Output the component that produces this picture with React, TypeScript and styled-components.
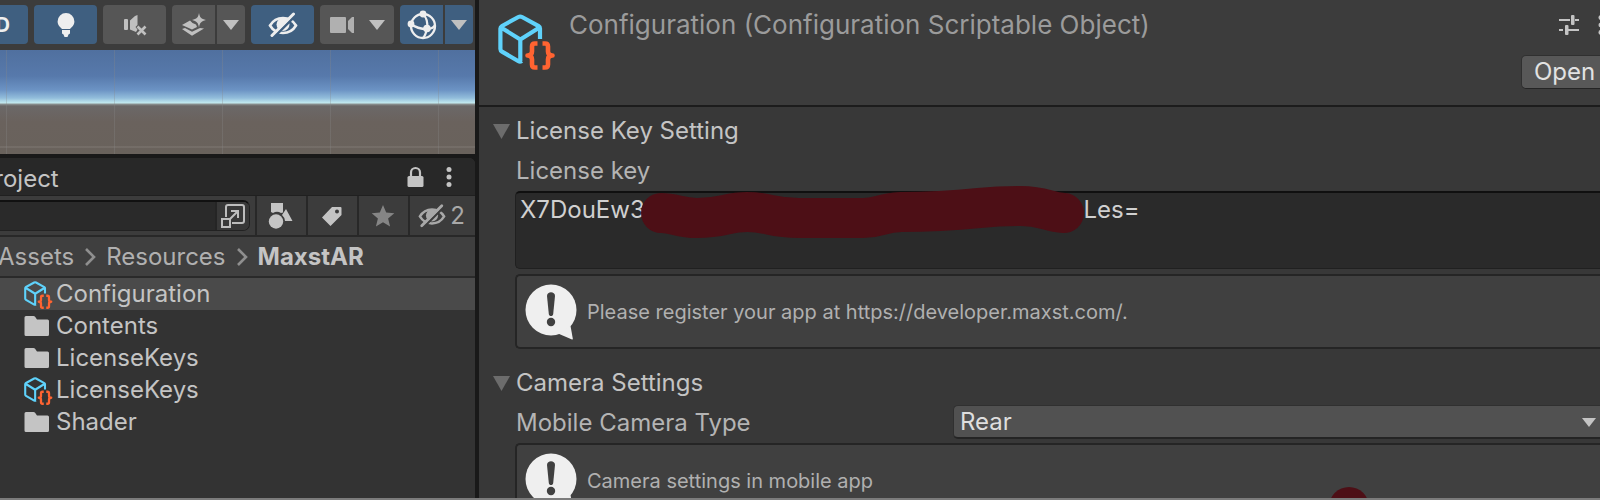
import React, { useState } from 'react';
import styled, { createGlobalStyle } from 'styled-components';

const GlobalStyle = createGlobalStyle`
  *, *::before, *::after { box-sizing: border-box; }
  body {
    margin: 0;
    background: #191919;
    color: #c4c4c4;
    font-family: Inter, "Liberation Sans", sans-serif;
    font-size: 24px;
    line-height: 32px;
  }
  button, input, select, textarea { font: inherit; color: inherit; }
  button { border: 0; padding: 0; background: none; }
  svg { display: block; flex: none; }
`;

const Editor = styled.div`
  display: flex;
  flex-direction: column;
  height: 100vh;
  overflow: hidden;
  border-bottom: 2px solid #7c7c7c;
`;

const Panes = styled.div`
  flex: 1;
  min-height: 0;
  display: grid;
  grid-template-columns: minmax(0, 475fr) minmax(0, 1121fr);
  column-gap: 4px;
`;

/* Left column: scene view over project browser */

const LeftPane = styled.div`
  display: flex;
  flex-direction: column;
  overflow: hidden;
`;

const SceneToolbar = styled.div`
  display: flex;
  justify-content: flex-end;
  gap: 6px;
  padding: 5px 2px 6px;
  background: #3c3c3c;
`;

const ToolGroup = styled.div`
  display: flex;
  gap: 2px;
`;

const ToolButton = styled.button<{ $width: number; $on?: boolean; $join?: 'left' | 'right' }>`
  display: flex;
  flex: none;
  align-items: center;
  justify-content: center;
  gap: 14px;
  width: ${(p) => p.$width}px;
  height: 39px;
  background: ${(p) => (p.$on ? '#3f5f80' : '#565656')};
  border-radius: ${(p) =>
    p.$join === 'left' ? '4px 0 0 4px' : p.$join === 'right' ? '0 4px 4px 0' : '4px'};
  color: ${(p) => (p.$on && p.$join !== 'right' ? '#eeeeee' : '#c0c0c0')};
  font-size: 20px;
  font-weight: 700;
`;

const SceneView = styled.div`
  height: 104px;
  background:
    repeating-linear-gradient(90deg, transparent 0 6px, #8888884d 6px 7px, transparent 7px 108px),
    linear-gradient(transparent 96px, #ffffff12 96px 98px, transparent 98px),
    linear-gradient(
      #50709f 0,
      #5779ab 26px,
      #6c93c4 40px,
      #92bddb 48px,
      #c3eaf0 53px,
      #8d9494 54px,
      #6b6868 56px,
      #6a625d 72px,
      #69625c 104px
    );
`;

const ProjectPanel = styled.section`
  flex: 1;
  display: flex;
  flex-direction: column;
  margin: 4px 0 0 -24px;
  background: #333333;
  border-top-right-radius: 6px;
  overflow: hidden;
`;

const TabBar = styled.div`
  display: flex;
  align-items: center;
  justify-content: space-between;
  height: 38px;
  padding: 0 23px 0 3px;
  background: #282828;
  border-bottom: 1px solid #202020;
`;

const TabTitle = styled.h2`
  margin: 4px 0 0;
  font-size: 24px;
  font-weight: 400;
`;

const TabActions = styled.div`
  display: flex;
  align-items: center;
  gap: 22px;
`;

const IconButton = styled.button`
  display: flex;
  align-items: center;
  justify-content: center;
`;

const BrowserToolbar = styled.div`
  display: flex;
  height: 41px;
  background: #3c3c3c;
  border-bottom: 2px solid #282828;
`;

const SearchBox = styled.div`
  flex: 1;
  min-width: 0;
  display: flex;
  margin: 4px 5px 4px 8px;
  border: 1px solid #222222;
  border-top: 2px solid #111111;
  border-radius: 7px;
  overflow: hidden;
`;

const SearchInput = styled.input`
  flex: 1;
  min-width: 0;
  border: 0;
  padding: 0 8px;
  background: #2a2a2a;
`;

const SearchJump = styled(IconButton)`
  width: 34px;
  background: #383838;
  border-left: 2px solid #252525;
`;

const FilterButton = styled.button<{ $wide?: boolean; $tone?: string }>`
  display: flex;
  align-items: center;
  justify-content: center;
  gap: 4px;
  width: ${(p) => (p.$wide ? 67 : 51)}px;
  padding-right: 2px;
  border-left: 2px solid #282828;
  color: ${(p) => p.$tone ?? '#c4c4c4'};
`;

const Breadcrumbs = styled.nav`
  display: flex;
  align-items: center;
  gap: 10px;
  height: 41px;
  padding-left: 22px;
  background: #3f3f3f;
  border-bottom: 2px solid #2a2a2a;
`;

const Crumb = styled.a<{ $current?: boolean }>`
  color: ${(p) => (p.$current ? '#c4c4c4' : '#b0b0b0')};
  font-weight: ${(p) => (p.$current ? 700 : 400)};
  text-decoration: none;
`;

const FileList = styled.ul`
  margin: 0;
  padding: 0;
  list-style: none;
`;

const FileRow = styled.li<{ $selected?: boolean }>`
  display: flex;
  align-items: center;
  gap: 3px;
  height: 32px;
  padding-left: 48px;
  background: ${(p) => (p.$selected ? '#4a4a4a' : 'transparent')};
`;

/* Right column: inspector */

const Inspector = styled.main`
  overflow: hidden;
  background: #383838;
`;

const InspectorHeader = styled.header`
  display: flex;
  gap: 13px;
  height: 107px;
  padding: 12px 0 0 19px;
  background: #3c3c3c;
  border-bottom: 2px solid #1c1c1c;
`;

const ObjectTitle = styled.h1`
  flex: 1;
  margin: -3px 0 0;
  color: #9b9b9b;
  font-size: 26px;
  font-weight: 400;
  white-space: nowrap;
`;

const HeaderActions = styled.div`
  display: flex;
  flex-direction: column;
  align-items: flex-end;
  gap: 17px;
  margin-right: -8px;
`;

const HeaderIcons = styled.div`
  display: flex;
  align-items: center;
  gap: 19px;
  height: 26px;
  padding-right: 4px;
`;

const OpenButton = styled.button`
  width: 87px;
  height: 34px;
  background: #585858;
  border: 1px solid #303030;
  border-bottom-color: #242424;
  border-radius: 5px;
  color: #e2e2e2;
  line-height: 30px;
`;

const Group = styled.section`
  padding: 4px 0 10px 36px;
`;

const Foldout = styled.h2`
  display: flex;
  align-items: center;
  gap: 6px;
  height: 40px;
  margin: 0 0 0 -22px;
  color: #c4c4c4;
  font-size: 24px;
  font-weight: 400;
`;

const FieldLabel = styled.label`
  display: block;
  height: 40px;
  padding-left: 1px;
  color: #b4b4b4;
  line-height: 40px;
`;

const KeyField = styled.div`
  position: relative;
  height: 78px;
  margin-bottom: 5px;
`;

const KeyArea = styled.textarea`
  display: block;
  width: 100%;
  height: 100%;
  padding: 1px 4px;
  background: #2a2a2a;
  border: 1px solid #202020;
  border-top: 2px solid #101010;
  border-right: 0;
  border-radius: 5px 0 0 5px;
  color: #d0d0d0;
  resize: none;
  overflow: hidden;
  outline: 0;
`;

const Stroke = styled.svg`
  position: absolute;
  top: -8px;
  left: 124px;
  pointer-events: none;
`;

const SelectRow = styled.div`
  display: grid;
  grid-template-columns: minmax(0, 438fr) minmax(0, 647fr);
  align-items: center;
  height: 40px;
`;

const SelectBox = styled.div`
  position: relative;
  display: flex;
  align-items: center;
  margin-bottom: 2px;
`;

const Select = styled.select`
  appearance: none;
  width: 100%;
  height: 34px;
  padding: 0 6px;
  background: #515151;
  border: 1px solid #303030;
  border-bottom: 2px solid #242424;
  border-right: 0;
  border-radius: 5px 0 0 5px;
  color: #dedede;
  line-height: 30px;
`;

const SelectArrow = styled.span`
  position: absolute;
  right: 4px;
  color: #c4c4c4;
  pointer-events: none;
`;

const HelpBox = styled.div`
  position: relative;
  display: flex;
  align-items: center;
  gap: 10px;
  height: 75px;
  padding-left: 8px;
  background: #404040;
  border: 2px solid #252525;
  border-right: 0;
  border-radius: 5px 0 0 5px;
  color: #b0b0b0;
  font-size: 20px;
  line-height: 28px;
`;

const Dot = styled.span`
  position: absolute;
  top: 42px;
  left: 75%;
  width: 40px;
  height: 40px;
  border-radius: 50%;
  background: #4d0f16;
`;

/* Icons */

const Triangle = ({ width = 16, height = 10 }: { width?: number; height?: number }) => (
  <svg width={width} height={height} viewBox="0 0 16 10" preserveAspectRatio="none">
    <path d="M0 0h16L8 10z" fill="currentColor" />
  </svg>
);

const FoldoutArrow = () => (
  <svg width="17" height="15" viewBox="0 0 17 15">
    <path d="M0 0h17L8.500 15z" fill="#6c6c6c" />
  </svg>
);

const BulbIcon = () => (
  <svg width="20" height="26" viewBox="0 0 20 26" fill="currentColor">
    <path d="M10 1a8.400 8.400 0 0 0-8.400 8.400c0 3.800 2.600 5.600 4.400 7.600h8c1.800-2 4.400-3.800 4.400-7.600A8.400 8.400 0 0 0 10 1z" />
    <path d="M6 18h8v3.500l-1.500 1L11.500 25h-3l-1-2.500-1.500-1z" />
  </svg>
);

const MuteIcon = () => (
  <svg width="24" height="22" viewBox="0 0 24 22" fill="currentColor">
    <rect x="1" y="5" width="4" height="11" rx="1" />
    <path d="M7 6.500 12 2l2.500-1v10l-2 2 2 2.500-1.500 2.500-6-2.500z" />
    <path d="m14.500 12.500 8 8M22.500 12.500l-8 8" stroke="currentColor" strokeWidth="2.600" />
  </svg>
);

const EffectsIcon = () => (
  <svg width="26" height="24" viewBox="0 0 26 24" fill="currentColor">
    <path d="M18 0c.8 4.500 2.200 6 7 7-4.800 1.200-6.200 2.700-7 7.500-.8-4.800-2.200-6.300-7-7.500 4.800-1 6.200-2.500 7-7z" />
    <path d="m1 12 8-4.500 2.500 2.500 3.500 1.500 1 2.500-5 2.500z" />
    <path d="m1 16 3-1 7 3.800 8-3.800 4 .5-12 7.200z" />
  </svg>
);

const EyeOffIcon = ({ width = 30, cut }: { width?: number; cut: string }) => (
  <svg width={width} height="26" viewBox="0 0 30 26" fill="none" stroke="currentColor">
    <path
      d="M2 13.500C5 8.500 9.500 6 15 6s10 2.500 13 7.500c-3 5-7.500 7.500-13 7.500S5 18.500 2 13.500z"
      strokeWidth="2.600"
    />
    <circle cx="15" cy="12.500" r="6.500" fill="currentColor" stroke="none" />
    <path d="M6.500 24.500 27.500 3.500" stroke={cut} strokeWidth="2.500" />
    <path d="M4 23.500 25.500 2" strokeWidth="3" strokeLinecap="round" />
  </svg>
);

const CameraIcon = () => (
  <svg width="25" height="18" viewBox="0 0 25 18" fill="currentColor" opacity=".85">
    <rect y="1" width="16" height="16" rx="1" />
    <path d="M18 5 22 1h2v16h-2l-4-4z" />
  </svg>
);

const GizmoIcon = () => (
  <svg width="30" height="30" viewBox="0 0 30 30" fill="none" stroke="currentColor" strokeWidth="2.300">
    <circle cx="16" cy="16" r="12" />
    <path d="M16 4c4 4 5 9 4 15-1 4-2 7-4 9M4 14c5 4 11 5 16 5 4 0 7-2 8-4" />
    <g fill="currentColor" stroke="none">
      <circle cx="16" cy="4" r="3.400" />
      <circle cx="4" cy="14" r="3.400" />
      <circle cx="20" cy="18.500" r="3.800" />
    </g>
  </svg>
);

const LockIcon = () => (
  <svg width="17" height="22" viewBox="0 0 17 22">
    <path d="M4 11V6.500a4.500 4.500 0 0 1 9 0V11" fill="none" stroke="currentColor" strokeWidth="2.200" />
    <rect x=".5" y="10" width="16" height="11" rx="1.500" fill="currentColor" />
  </svg>
);

const DotsIcon = () => (
  <svg width="6" height="20" viewBox="0 0 6 20" fill="currentColor">
    <circle cx="3" cy="2.600" r="2.500" />
    <circle cx="3" cy="10" r="2.500" />
    <circle cx="3" cy="17.400" r="2.500" />
  </svg>
);

const PopOutIcon = () => (
  <svg width="24" height="24" viewBox="0 0 24 24" fill="none" stroke="#bdbdbd" strokeWidth="2">
    <path d="M5 13V3a2 2 0 0 1 2-2h14a2 2 0 0 1 2 2v14a2 2 0 0 1-2 2H11" />
    <rect x="1" y="15" width="8" height="8" />
    <path d="m9 15 8-8M10 7h7v7" />
  </svg>
);

const ShapesIcon = () => (
  <svg width="26" height="28" viewBox="0 0 26 28" fill="currentColor">
    <path d="M3 1h12v9.500l-2 .5a8 8 0 0 0-8 0l-2-1z" />
    <circle cx="8" cy="19.500" r="7.200" />
    <path d="m18 7 6.500 12H17a9 9 0 0 0-3-6z" />
  </svg>
);

const TagIcon = () => (
  <svg width="22" height="22" viewBox="0 0 22 22">
    <path
      fillRule="evenodd"
      d="M11 2h8.500a1 1 0 0 1 1 1v7L9.500 21 1 12.500zM16 4.500a2 2 0 1 0 0 4 2 2 0 0 0 0-4z"
      fill="currentColor"
    />
  </svg>
);

const StarIcon = () => (
  <svg width="24" height="24" viewBox="0 0 24 24">
    <path d="m12 1 3.200 7.500 8.100.7-6.200 5.300 2 8L12 18.200 4.900 22.500l2-8L.7 9.200l8.100-.7z" fill="currentColor" />
  </svg>
);

const Chevron = () => (
  <svg width="12" height="18" viewBox="0 0 12 18">
    <path d="m2 1 8 8-8 8" fill="none" stroke="#8f8f8f" strokeWidth="2.600" />
  </svg>
);

const AssetIcon = ({ size }: { size: number }) => (
  <svg width={size} height={size} viewBox="0 0 58 58" fill="none" strokeLinejoin="round">
    <path
      d="M42 27V16.500c0-1-.4-1.800-1.300-2.300L24 5c-1.300-.7-2.300-.7-3.600 0L4 14c-1 .6-1.600 1.300-1.600 2.600V37c0 1.300.6 2 1.600 2.600l16.500 9.600c1 .6 2 .6 3.500-.2M3 15.500l19.300 12L41.500 15.500M22.300 28v21"
      stroke="#5fd2fb"
      strokeWidth="4.200"
    />
    <path
      d="M39.500 31.500H37c-2 0-3 1-3 3v5c0 2.500-1.500 4-4.500 4 3 0 4.500 1.500 4.500 4v5c0 2 1 3 3 3h2.500M44.500 31.500H47c2 0 3 1 3 3v5c0 2.500 1.500 4 4.500 4-3 0-4.500 1.500-4.500 4v5c0 2-1 3-3 3h-2.500"
      stroke="#ff6331"
      strokeWidth="4.600"
    />
  </svg>
);

const FolderIcon = () => (
  <svg width="29" height="22" viewBox="0 0 29 22">
    <path d="M2 1h7.500a2 2 0 0 1 1.600.8L13 4.500h10.500a1.500 1.500 0 0 1 1.500 1.500v13.500a1.500 1.500 0 0 1-1.500 1.500H2A1.500 1.500 0 0 1 .5 19.500v-17A1.500 1.500 0 0 1 2 1z" fill="#c4c4c4" />
  </svg>
);

const SlidersIcon = () => (
  <svg width="20" height="20" viewBox="0 0 20 20" fill="#c4c4c4">
    <path d="M0 4h11v2H0zM16 4h4v2h-4zM0 14h4v2H0zM9 14h11v2H9z" />
    <rect x="12" width="3.500" height="10" rx="1" />
    <rect x="6" y="10" width="3.500" height="10" rx="1" />
  </svg>
);

const NoticeIcon = () => (
  <svg width="52" height="56" viewBox="0 0 52 56">
    <circle cx="26" cy="26" r="25.500" fill="#efefef" />
    <path d="M33 49.500 47 55.500q1 .3.800-1L45.500 42z" fill="#efefef" />
    <path d="M22 12c0-5 8-5 8 0l-1.800 18c-.3 2.700-4.100 2.700-4.400 0z" fill="#404040" />
    <circle cx="26" cy="38" r="4.200" fill="#404040" />
  </svg>
);

const files = [
  { name: 'Configuration', kind: 'asset', selected: true },
  { name: 'Contents', kind: 'folder' },
  { name: 'LicenseKeys', kind: 'folder' },
  { name: 'LicenseKeys', kind: 'asset' },
  { name: 'Shader', kind: 'folder' },
];

const MASK = '\u00a0'.repeat(65);

export default function App() {
  const [licenseKey, setLicenseKey] = useState(`X7DouEw3${MASK}Les=`);

  return (
    <>
      <GlobalStyle />
      <Editor>
        <Panes>
          <LeftPane>
            <SceneToolbar>
              <ToolButton $width={63} $on>2D</ToolButton>
              <ToolButton $width={63} $on aria-label="Lighting"><BulbIcon /></ToolButton>
              <ToolButton $width={63} aria-label="Audio"><MuteIcon /></ToolButton>
              <ToolGroup>
                <ToolButton $width={43} $join="left" aria-label="Effects"><EffectsIcon /></ToolButton>
                <ToolButton $width={28} $join="right" aria-label="Effects menu"><Triangle /></ToolButton>
              </ToolGroup>
              <ToolButton $width={63} $on aria-label="Hidden objects"><EyeOffIcon cut="#3f5f80" /></ToolButton>
              <ToolButton $width={74} aria-label="Camera"><CameraIcon /><Triangle /></ToolButton>
              <ToolGroup>
                <ToolButton $width={43} $on $join="left" aria-label="Gizmos"><GizmoIcon /></ToolButton>
                <ToolButton $width={28} $on $join="right" aria-label="Gizmos menu"><Triangle /></ToolButton>
              </ToolGroup>
            </SceneToolbar>
            <SceneView />
            <ProjectPanel>
              <TabBar>
                <TabTitle>Project</TabTitle>
                <TabActions>
                  <IconButton aria-label="Lock"><LockIcon /></IconButton>
                  <IconButton aria-label="Menu"><DotsIcon /></IconButton>
                </TabActions>
              </TabBar>
              <BrowserToolbar>
                <SearchBox>
                  <SearchInput type="text" aria-label="Search assets" />
                  <SearchJump aria-label="Open search"><PopOutIcon /></SearchJump>
                </SearchBox>
                <FilterButton aria-label="Filter by type"><ShapesIcon /></FilterButton>
                <FilterButton aria-label="Filter by label"><TagIcon /></FilterButton>
                <FilterButton $tone="#858585" aria-label="Favorites"><StarIcon /></FilterButton>
                <FilterButton $wide $tone="#a8a8a8" aria-label="Hidden packages">
                  <EyeOffIcon width={28} cut="#3c3c3c" />2
                </FilterButton>
              </BrowserToolbar>
              <Breadcrumbs>
                <Crumb href="#assets">Assets</Crumb>
                <Chevron />
                <Crumb href="#resources">Resources</Crumb>
                <Chevron />
                <Crumb href="#maxstar" $current>MaxstAR</Crumb>
              </Breadcrumbs>
              <FileList>
                {files.map((file, i) => (
                  <FileRow key={i} $selected={file.selected}>
                    {file.kind === 'asset' ? <AssetIcon size={29} /> : <FolderIcon />}
                    {file.name}
                  </FileRow>
                ))}
              </FileList>
            </ProjectPanel>
          </LeftPane>

          <Inspector>
            <InspectorHeader>
              <AssetIcon size={58} />
              <ObjectTitle>Configuration (Configuration Scriptable Object)</ObjectTitle>
              <HeaderActions>
                <HeaderIcons>
                  <IconButton aria-label="Presets"><SlidersIcon /></IconButton>
                  <IconButton aria-label="More"><DotsIcon /></IconButton>
                </HeaderIcons>
                <OpenButton>Open</OpenButton>
              </HeaderActions>
            </InspectorHeader>

            <Group>
              <Foldout>
                <FoldoutArrow />
                License Key Setting
              </Foldout>
              <FieldLabel htmlFor="license-key">License key</FieldLabel>
              <KeyField>
                <KeyArea
                  id="license-key"
                  spellCheck={false}
                  value={licenseKey}
                  onChange={(e) => setLicenseKey(e.target.value)}
                />
                <Stroke width="448" height="60" viewBox="0 0 448 60">
                  <path
                    d="M22 30C36 30 40 35 58 35C84 35 88 29 108 29C130 29 132 35 160 35H224C242 35 240 30 262 29C290 29 310 28 340 25C360 23 366 23 382 23C405 23 408 29 425 30"
                    fill="none"
                    stroke="#4d0f16"
                    strokeWidth="40"
                    strokeLinecap="round"
                    strokeLinejoin="round"
                  />
                </Stroke>
              </KeyField>
              <HelpBox>
                <NoticeIcon />
                Please register your app at https://developer.maxst.com/.
              </HelpBox>
            </Group>

            <Group>
              <Foldout>
                <FoldoutArrow />
                Camera Settings
              </Foldout>
              <SelectRow>
                <FieldLabel htmlFor="camera-type">Mobile Camera Type</FieldLabel>
                <SelectBox>
                  <Select id="camera-type" defaultValue="Rear">
                    <option>Rear</option>
                    <option>Front</option>
                  </Select>
                  <SelectArrow><Triangle width={14} height={9} /></SelectArrow>
                </SelectBox>
              </SelectRow>
              <HelpBox>
                <NoticeIcon />
                Camera settings in mobile app
                <Dot />
              </HelpBox>
            </Group>
          </Inspector>
        </Panes>
      </Editor>
    </>
  );
}
